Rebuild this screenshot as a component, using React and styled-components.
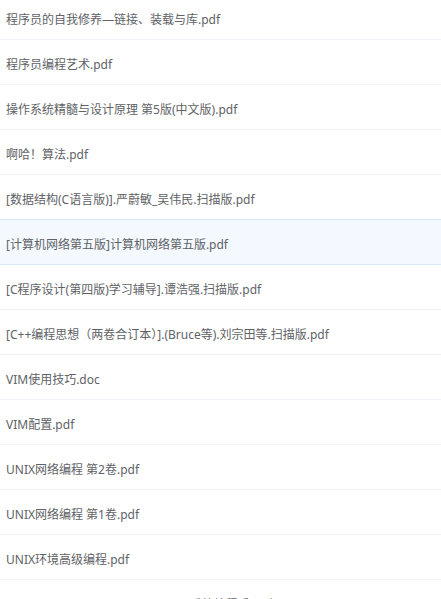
import React from "react";
import styled, { createGlobalStyle } from "styled-components";

const Global = createGlobalStyle`
  html, body { margin: 0; padding: 0; background: #fff; overflow: hidden; }
  body { font-family: "Noto Sans", "Noto Sans CJK SC", sans-serif; }
`;

const List = styled.ul`
  list-style: none;
  margin: -5px 0 0;
  padding: 0;
  width: 441px;
`;

const Row = styled.li`
  box-sizing: border-box;
  height: 45px;
  display: flex;
  align-items: center;
  padding: 4px 6px 0;
  font-size: 12px;
  color: #606266;
  white-space: nowrap;
  border-bottom: 1px solid ${(p) => (p.$active ? "#d6e9fb" : "#f0f2f6")};
  background: ${(p) => (p.$active ? "#f3f9fe" : "#fff")};
  ${(p) => p.$active && `border-top: 1px solid #d6e9fb; margin-top: -1px; height: 46px;`}
`;

const files = [
  "程序员的自我修养—链接、装载与库.pdf",
  "程序员编程艺术.pdf",
  "操作系统精髓与设计原理 第5版(中文版).pdf",
  "啊哈！算法.pdf",
  "[数据结构(C语言版)].严蔚敏_吴伟民.扫描版.pdf",
  "[计算机网络第五版]计算机网络第五版.pdf",
  "[C程序设计(第四版)学习辅导].谭浩强.扫描版.pdf",
  "[C++编程思想（两卷合订本）].(Bruce等).刘宗田等.扫描版.pdf",
  "VIM使用技巧.doc",
  "VIM配置.pdf",
  "UNIX网络编程 第2卷.pdf",
  "UNIX网络编程 第1卷.pdf",
  "UNIX环境高级编程.pdf",
  "isbn_978_7_111_xxxx_unix_linux 系统编程手册(上册).pdf",
];

export default function App() {
  return (
    <>
      <Global />
      <List>
        {files.map((f, i) => (
          <Row key={i} $active={i === 5}>
            {f}
          </Row>
        ))}
      </List>
    </>
  );
}
